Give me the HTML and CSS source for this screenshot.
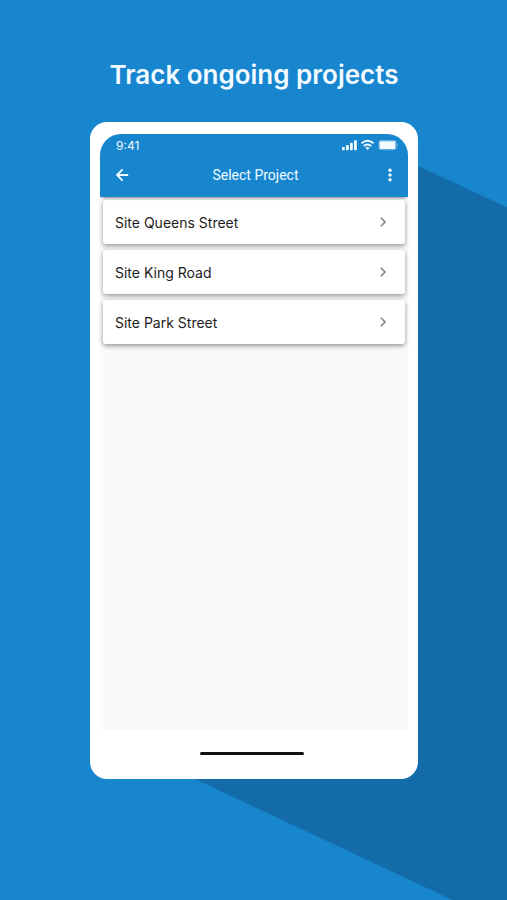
FILE: index.html
```html
<!DOCTYPE html>
<html lang="en">
<head>
<meta charset="utf-8">
<meta name="viewport" content="width=device-width, initial-scale=1">
<title>Track ongoing projects</title>
<link rel="stylesheet" href="styles.css">
</head>
<body>
<main class="promo">
  <h1 class="headline">Track ongoing projects</h1>
  <div class="device">
    <section class="phone">
      <header class="top">
        <div class="status">
          <span>9:41</span>
          <svg class="signals" width="56" height="12" viewBox="0 0 56 12" fill="currentColor" aria-hidden="true">
            <rect x="0" y="8" width="2.8" height="3.2" rx=".7"/>
            <rect x="4" y="6" width="2.8" height="5.2" rx=".7"/>
            <rect x="8" y="3.8" width="2.8" height="7.4" rx=".7"/>
            <rect x="12" y="1.2" width="2.8" height="10" rx=".7"/>
            <g fill="none" stroke="currentColor" stroke-width="1.9">
              <path d="M19.4 4.4Q25.5-.8 31.6 4.4"/>
              <path d="M21.8 7.1Q25.5 4 29.2 7.1"/>
            </g>
            <path d="M23.4 8.7Q25.5 7.1 27.6 8.7L25.5 11.1Z"/>
            <rect x="36.9" y="1.5" width="17.2" height="9.2" rx="2" fill="none" stroke="currentColor" stroke-opacity=".4"/>
            <rect x="37.6" y="2.2" width="15.8" height="7.8" rx="1"/>
            <path d="M55 4.5Q56 5 56 6T55 7.5Z" opacity=".4"/>
          </svg>
        </div>
        <nav class="bar">
          <button class="icon" type="button" aria-label="Back">
            <svg width="14" height="14" viewBox="0 0 14 14" fill="none" stroke="currentColor" stroke-width="1.8"><path d="M13.2 7H2.4M7.6 1.4L2 7L7.6 12.6"/></svg>
          </button>
          <h2 class="title">Select Project</h2>
          <button class="icon icon-end" type="button" aria-label="More options">
            <svg width="4" height="14" viewBox="0 0 4 14" fill="currentColor"><circle cx="2" cy="2.2" r="1.7"/><circle cx="2" cy="7" r="1.7"/><circle cx="2" cy="11.8" r="1.7"/></svg>
          </button>
        </nav>
      </header>
      <div class="list">
        <a class="card" href="#queens">Site Queens Street <svg class="chevron" width="6" height="10" viewBox="0 0 6 10"><path d="M.8 .8L5 5L.8 9.2"/></svg></a>
        <a class="card" href="#king">Site King Road <svg class="chevron" width="6" height="10" viewBox="0 0 6 10"><path d="M.8 .8L5 5L.8 9.2"/></svg></a>
        <a class="card" href="#park">Site Park Street <svg class="chevron" width="6" height="10" viewBox="0 0 6 10"><path d="M.8 .8L5 5L.8 9.2"/></svg></a>
      </div>
      <div class="home"></div>
    </section>
  </div>
</main>
</body>
</html>
```
FILE: styles.css
```css
* {
  box-sizing: border-box;
}

body {
  margin: 0;
  background: #1886cf;
  font-family: Inter, "Liberation Sans", sans-serif;
}

.promo {
  display: flex;
  flex-direction: column;
  min-height: 100vh;
  padding: 59px 89px 121px 90px;
  overflow: hidden;
}

.headline {
  margin: 0 -40px 31px;
  color: #f2fbff;
  font-size: 26px;
  font-weight: 600;
  line-height: 32px;
  text-align: center;
}

.device {
  position: relative;
  display: flex;
  flex: 1;
}

/* Long shadow cast towards the lower right */
.device::before {
  content: "";
  position: absolute;
  top: 0;
  left: 0;
  width: 928px;
  height: 1100px;
  background: #136ba7;
  clip-path: polygon(328px 44px, 928px 322px, 928px 1044px, 105px 657px);
}

.phone {
  position: relative;
  display: flex;
  flex: 1;
  flex-direction: column;
  min-width: 0;
  padding: 12px 10px 0;
  border-radius: 17px;
  background: #fff;
}

.top {
  position: relative;
  padding-bottom: 3px;
  border-radius: 21px 21px 0 0;
  background: #1886cf;
  box-shadow: 0 3px 3px -2px rgba(0, 0, 0, 0.45);
  color: #f2fbff;
}

.status {
  display: flex;
  align-items: center;
  justify-content: space-between;
  height: 22px;
  padding: 0 10px 0 16px;
  font-size: 12px;
}

.bar {
  display: grid;
  grid-template-columns: 32px 1fr 32px;
  align-items: center;
  height: 38px;
  padding: 0 16px 0 15px;
}

.title {
  margin: 0;
  padding-left: 4px;
  font-family: Roboto, Inter, sans-serif;
  font-size: 14px;
  font-weight: 400;
  line-height: 20px;
  text-align: center;
}

.icon {
  display: flex;
  align-items: center;
  height: 32px;
  padding: 0;
  border: 0;
  background: none;
  color: inherit;
}

.icon-end {
  justify-content: flex-end;
}

.list {
  display: flex;
  flex: 1;
  flex-direction: column;
  gap: 6px;
  padding: 3px;
  background: #fafafa;
}

.card {
  display: flex;
  align-items: center;
  justify-content: space-between;
  height: 44px;
  padding: 0 19px 0 12px;
  border-radius: 3px;
  background: #fff;
  box-shadow: 0 2px 5px rgba(0, 0, 0, 0.4);
  color: #1c1c1c;
  font-size: 14px;
  text-decoration: none;
}

.chevron {
  fill: none;
  stroke: #858585;
  stroke-width: 1.6;
}

.home {
  width: 104px;
  height: 3px;
  margin: 22px auto 24px 100px;
  border-radius: 2px;
  background: #111;
}
```
